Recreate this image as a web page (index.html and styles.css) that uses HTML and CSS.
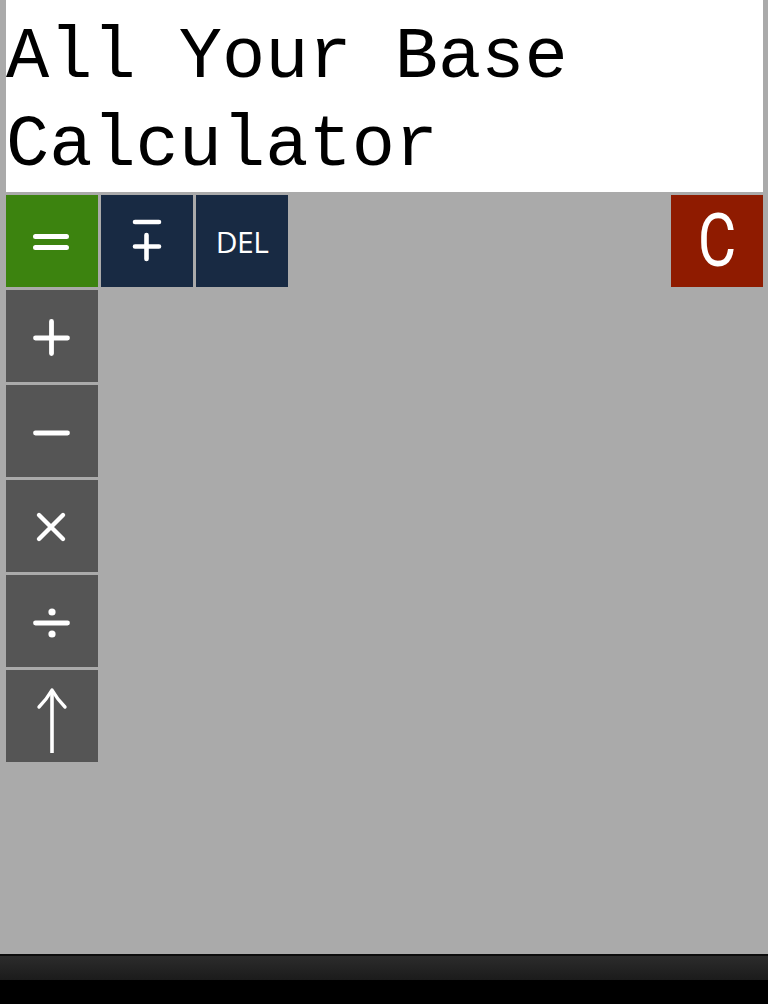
FILE: index.html
```html
<!DOCTYPE html>
<html>
<head>
<meta charset="utf-8">
<link rel="stylesheet" href="styles.css">
</head>
<body>
<div class="screen">
  <div class="app">
    <header class="title">All Your Base Calculator</header>
    <div class="toprow">
      <button class="key key-eq" aria-label="equals">
        <svg viewBox="0 0 92 92" class="ico"><path d="M29.5 41.5H60.5M29.5 52.5H60.5" stroke="#fff" stroke-width="5" stroke-linecap="round" fill="none"/></svg>
      </button>
      <button class="key key-navy" aria-label="negate">
        <svg viewBox="0 0 92 92" class="ico"><path d="M34 27H58M34 51.5H58M45.5 40V64" stroke="#fff" stroke-width="4.6" stroke-linecap="round" fill="none"/></svg>
      </button>
      <button class="key key-navy key-text">DEL</button>
      <div class="spacer"></div>
      <button class="key key-red"><span class="c">C</span></button>
    </div>
    <div class="opcol">
      <button class="key key-gray" aria-label="plus">
        <svg viewBox="0 0 92 92" class="ico"><path d="M29.5 48H61.5M45.5 31.5V63.5" stroke="#fff" stroke-width="4.8" stroke-linecap="round" fill="none"/></svg>
      </button>
      <button class="key key-gray" aria-label="minus">
        <svg viewBox="0 0 92 92" class="ico"><path d="M29.5 48H61.5" stroke="#fff" stroke-width="4.8" stroke-linecap="round" fill="none"/></svg>
      </button>
      <button class="key key-gray" aria-label="times">
        <svg viewBox="0 0 92 92" class="ico"><path d="M33 35L57 59M57 35L33 59" stroke="#fff" stroke-width="4.4" stroke-linecap="round" fill="none"/></svg>
      </button>
      <button class="key key-gray" aria-label="divide">
        <svg viewBox="0 0 92 92" class="ico"><path d="M29.5 48H61.5" stroke="#fff" stroke-width="4.8" stroke-linecap="round" fill="none"/><circle cx="46" cy="37" r="3.6" fill="#fff"/><circle cx="46" cy="59" r="3.6" fill="#fff"/></svg>
      </button>
      <button class="key key-gray" aria-label="power">
        <svg viewBox="0 0 92 92" class="ico"><path d="M46 22V83" stroke="#fff" stroke-width="3.6" fill="none"/><path d="M33 37C38 32 42 27 46 20C50 27 54 32 59 37" stroke="#fff" stroke-width="3.4" stroke-linejoin="round" stroke-linecap="round" fill="none"/></svg>
      </button>
    </div>
  </div>
  <div class="sysbar"></div>
  <div class="navbar"></div>
</div>
</body>
</html>
```
FILE: styles.css
```css
* { box-sizing: border-box; }
html, body { margin: 0; padding: 0; }
body {
  width: 768px;
  height: 1004px;
  background: #000;
  overflow: hidden;
}
.screen {
  display: flex;
  flex-direction: column;
  height: 1004px;
}
.app {
  height: 954px;
  background: #aaaaaa;
  padding: 0 5px 0 6px;
  display: flex;
  flex-direction: column;
  gap: 3px;
}
.title {
  background: #fff;
  height: 192px;
  font-family: "Courier New", "Nimbus Mono PS", "Nimbus Mono L", FreeMono, "Liberation Mono", monospace;
  font-size: 72px;
  line-height: 88px;
  color: #000;
  padding: 14px 0 0 0;
}
.toprow {
  display: flex;
  gap: 3px;
}
.spacer { flex: 1; }
.opcol {
  display: flex;
  flex-direction: column;
  gap: 3px;
}
.key {
  width: 92px;
  height: 92px;
  border: 0;
  padding: 0;
  margin: 0;
  display: flex;
  align-items: center;
  justify-content: center;
  color: #fff;
  flex: none;
}
.ico { width: 92px; height: 92px; display: block; }
.key-eq { background: #3c830f; }
.key-navy { background: #182a43; }
.key-red { background: #8f1b00; }
.key-gray { background: #555555; }
.key-text {
  font-family: "Open Sans", "DejaVu Sans", sans-serif;
  font-size: 30px;
  letter-spacing: -0.5px;
}
.c {
  font-family: Roboto, "DejaVu Sans", sans-serif;
  font-size: 74px;
  line-height: 1;
  display: inline-block;
  transform: scaleX(0.8);
}
.sysbar {
  height: 26px;
  background: linear-gradient(#2c2c2c, #1b1b1b);
  border-top: 2px solid #0d0d0d;
}
.navbar {
  height: 24px;
  background: #000;
}
```
